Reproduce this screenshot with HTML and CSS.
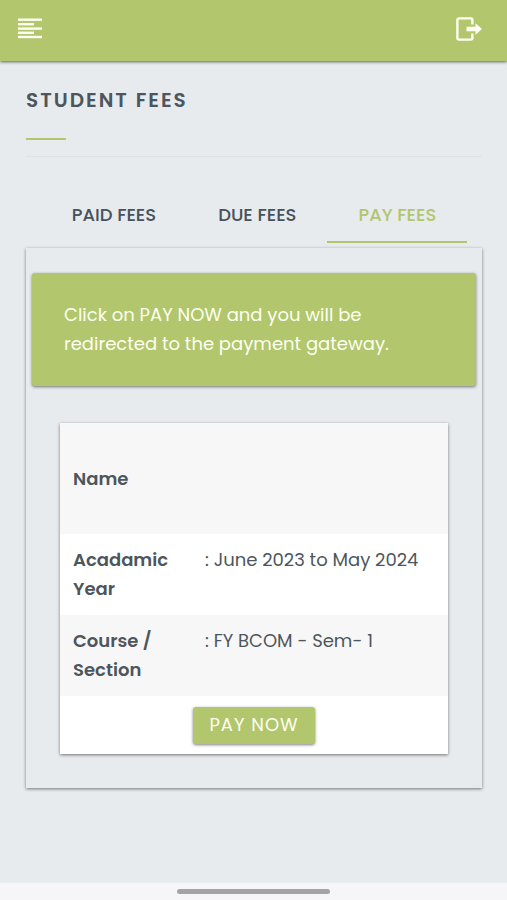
FILE: index.html
```html
<!DOCTYPE html>
<html lang="en">
<head>
<meta charset="utf-8">
<meta name="viewport" content="width=device-width, initial-scale=1">
<title>Student Fees</title>
<link rel="stylesheet" href="styles.css">
</head>
<body>
<header class="topbar">
  <button class="icon-button" type="button" aria-label="Menu">
    <svg width="24" height="22" viewBox="0 0 24 22" fill="currentColor" aria-hidden="true">
      <rect x="0" y="0.500" width="24" height="2.4"/>
      <rect x="0" y="5" width="16" height="2.4"/>
      <rect x="0" y="9.400" width="24" height="2.4"/>
      <rect x="0" y="13.600" width="16" height="2.4"/>
      <rect x="0" y="17.800" width="24" height="2.4"/>
    </svg>
  </button>
  <a class="icon-button" href="#" aria-label="Log out">
    <svg width="26" height="24" viewBox="0 0 26 24" aria-hidden="true">
      <path d="M16.400 7.400V3a1.600 1.600 0 0 0-1.600-1.600H3a1.600 1.600 0 0 0-1.600 1.600v18a1.600 1.600 0 0 0 1.600 1.600h11.800a1.600 1.600 0 0 0 1.600-1.600v-4.400" fill="none" stroke="currentColor" stroke-width="2.400"/>
      <path d="M10.500 9.800h9V6.200L26 12l-6.500 5.800V14.200h-9z" fill="currentColor"/>
    </svg>
  </a>
</header>
<main class="content">
  <h1 class="title">STUDENT FEES</h1>
  <nav class="tabs">
    <a class="tab" href="#paid">PAID FEES</a>
    <a class="tab" href="#due">DUE FEES</a>
    <a class="tab tab-active" href="#pay" aria-current="page">PAY FEES</a>
  </nav>
  <section class="panel">
    <p class="notice">Click on PAY NOW and you will be redirected to the payment gateway.</p>
    <div class="card">
      <table class="details">
        <tr class="row-name"><th scope="row">Name</th><td></td></tr>
        <tr><th scope="row">Acadamic Year</th><td>: June 2023 to May 2024</td></tr>
        <tr><th scope="row">Course / Section</th><td>: FY BCOM - Sem- 1</td></tr>
      </table>
      <div class="actions"><button class="pay" type="button">PAY NOW</button></div>
    </div>
  </section>
</main>
<footer class="homebar"><div class="handle"></div></footer>
</body>
</html>
```
FILE: styles.css
```css
* { box-sizing: border-box; }

body {
  margin: 0;
  min-height: 100vh;
  display: flex;
  flex-direction: column;
  background: #e7ebee;
  color: #4c565c;
  font: 18px/29px Poppins, Inter, "Liberation Sans", sans-serif;
}

.topbar {
  display: flex;
  align-items: center;
  justify-content: space-between;
  height: 61px;
  padding: 0 25px 4px 18px;
  background: #b2c66e;
  box-shadow: 0 1px 3px rgba(0, 0, 0, .6);
}

.icon-button {
  display: flex;
  padding: 0;
  border: 0;
  background: none;
  color: #fdfff0;
}

.content {
  flex: 1;
  padding: 24px 25px 32px 26px;
}

.title {
  margin: 0;
  padding-bottom: 24px;
  border-bottom: 1px solid #dde2e5;
  font-size: 20px;
  font-weight: 600;
  line-height: 30px;
  letter-spacing: 2px;
}

.title::after {
  content: "";
  display: block;
  width: 40px;
  height: 2px;
  margin-top: 23px;
  margin-bottom: -8px;
  background: #b2c66e;
}

.tabs {
  display: flex;
  justify-content: center;
  margin: 32px 0 5px;
}

.tab {
  padding: 11px 31px 12px;
  border-bottom: 2px solid transparent;
  color: #46525c;
  font-weight: 500;
  text-decoration: none;
  white-space: nowrap;
}

.tab-active {
  border-color: #b2c66e;
  color: #b2c66e;
}

.panel {
  padding: 25px 6px 34px;
  box-shadow: 0 1px 3px rgba(0, 0, 0, .5);
}

.notice {
  margin: 0;
  padding: 27px 32px 28px;
  border-radius: 3px;
  background: #b2c66e;
  box-shadow: 0 1px 3px rgba(0, 0, 0, .5);
  color: #fdfff0;
}

.card {
  margin: 37px 28px 0;
  background: #fff;
  box-shadow: 0 1px 3px rgba(0, 0, 0, .5);
}

.details {
  width: 100%;
  border-collapse: collapse;
  table-layout: fixed;
}

.details th,
.details td {
  padding: 11px 13px 12px;
  text-align: left;
  vertical-align: top;
}

.details th {
  width: 132px;
  font-weight: 600;
}

.details td { padding-right: 0; }

.details tr:nth-child(odd) { background: #f7f7f8; }

.details .row-name th {
  height: 111px;
  vertical-align: middle;
}

.actions {
  display: flex;
  justify-content: center;
  padding: 11px 0 10px;
}

.pay {
  padding: 3px 16px 5px;
  border: 0;
  border-radius: 3px;
  background: #b2c66e;
  box-shadow: 0 1px 3px rgba(0, 0, 0, .5);
  color: #fdfff0;
  font: inherit;
  letter-spacing: 1px;
}

.homebar {
  display: flex;
  justify-content: center;
  padding: 6px 0;
  background: #f6f6f8;
}

.handle {
  width: 30%;
  height: 5px;
  border-radius: 3px;
  background: #a4a4a5;
}
```
